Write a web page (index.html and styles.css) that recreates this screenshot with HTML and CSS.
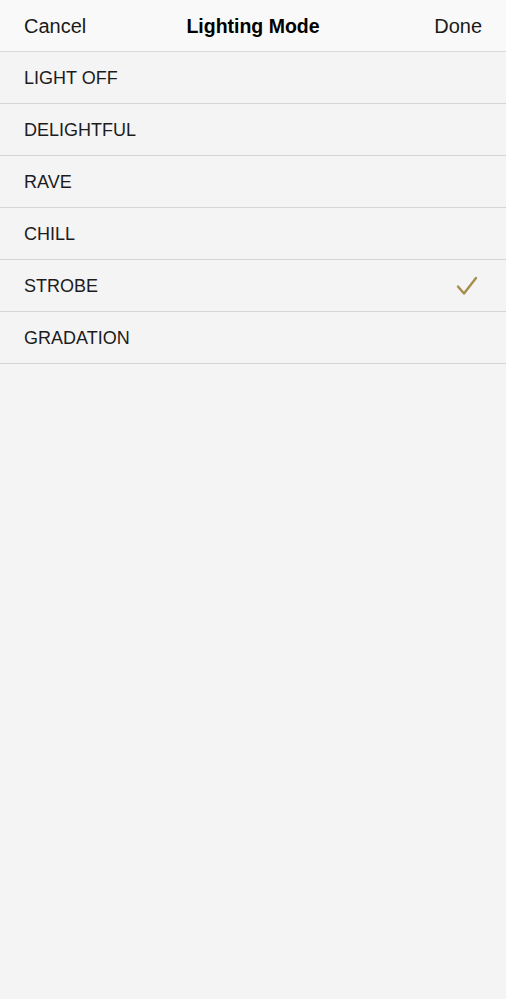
FILE: index.html
```html
<!DOCTYPE html>
<html lang="en">
<head>
  <meta charset="UTF-8">
  <meta name="viewport" content="width=device-width, initial-scale=1.0">
  <title>Lighting Mode</title>
  <link rel="stylesheet" href="styles.css">
</head>
<body>
  <header class="navbar">
    <span class="nav-btn">Cancel</span>
    <h1 class="nav-title">Lighting Mode</h1>
    <span class="nav-btn right">Done</span>
  </header>

  <ul class="mode-list">
    <li class="mode">LIGHT OFF</li>
    <li class="mode">DELIGHTFUL</li>
    <li class="mode">RAVE</li>
    <li class="mode">CHILL</li>
    <li class="mode selected">STROBE
      <svg class="check" width="22" height="20" viewBox="0 0 22 20">
        <path d="M2 10.5 L8 17.5 L20 2" fill="none" stroke="#a88c4e" stroke-width="2.4" stroke-linecap="round" stroke-linejoin="round"/>
      </svg>
    </li>
    <li class="mode">GRADATION</li>
  </ul>
</body>
</html>
```

FILE: styles.css
```css
body {
  margin: 0;
  background: #f4f4f4;
  font-family: "Liberation Sans", Arial, sans-serif;
  color: #1c1c1c;
}
.navbar {
  display: grid;
  grid-template-columns: 1fr auto 1fr;
  align-items: center;
  height: 50px;
  padding: 1px 24px 0;
  background: #f9f9f9;
  border-bottom: 1px solid #d8d8d8;
}
.nav-btn {
  font-size: 20px;
  color: #1a1a1a;
}
.nav-btn.right {
  text-align: right;
}
.nav-title {
  margin: 0;
  font-size: 19.5px;
  font-weight: bold;
  color: #000;
}
.mode-list {
  list-style: none;
  margin: 0;
  padding: 0;
}
.mode {
  display: flex;
  align-items: center;
  justify-content: space-between;
  height: 50px;
  padding: 1px 28px 0 24px;
  font-size: 18px;
  border-bottom: 1px solid #d6d6d6;
}
```
